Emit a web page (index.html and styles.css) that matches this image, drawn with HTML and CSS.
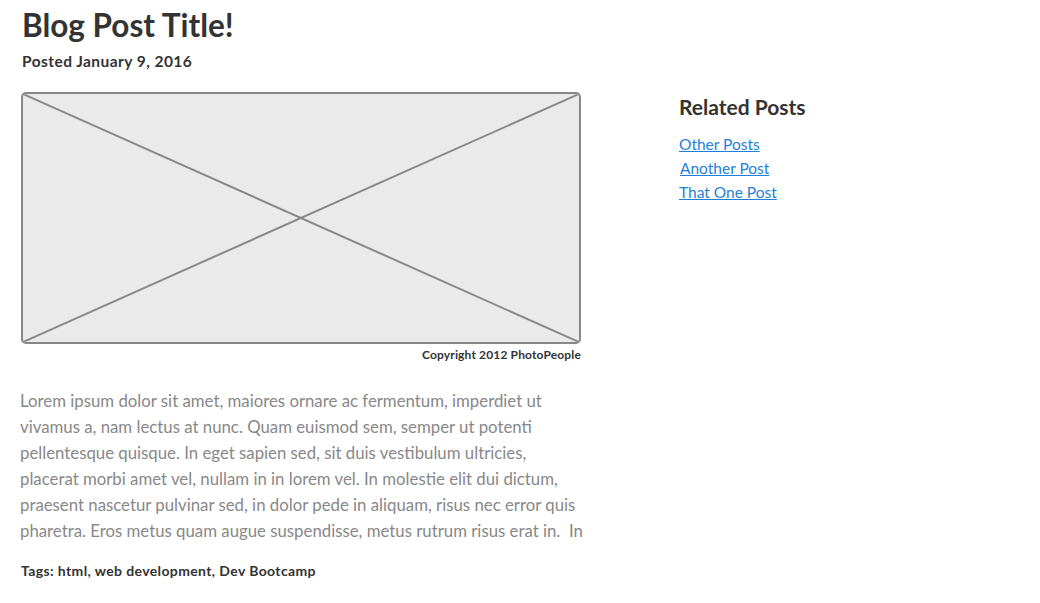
FILE: index.html
```html
<!DOCTYPE html>
<html>
<head>
<meta charset="utf-8">
<link rel="stylesheet" href="styles.css">
</head>
<body>
<div class="page">
  <main class="post">
    <h1 class="title">Blog Post Title!</h1>
    <p class="date">Posted January 9, 2016</p>
    <figure class="figure">
      <div class="placeholder">
        <svg class="cross" viewBox="0 0 100 100" preserveAspectRatio="none">
          <line x1="0" y1="0" x2="100" y2="100"/>
          <line x1="100" y1="0" x2="0" y2="100"/>
        </svg>
      </div>
      <figcaption class="caption">Copyright 2012 PhotoPeople</figcaption>
    </figure>
    <p class="body-text">Lorem ipsum dolor sit amet, maiores ornare ac fermentum, imperdiet ut vivamus a, nam lectus at nunc. Quam euismod sem, semper ut potenti pellentesque quisque. In eget sapien sed, sit duis vestibulum ultricies, placerat morbi amet vel, nullam in in lorem vel. In molestie elit dui dictum, praesent nascetur pulvinar sed, in dolor pede in aliquam, risus nec error quis pharetra. Eros metus quam augue suspendisse, metus rutrum risus erat in.&nbsp; In</p>
    <p class="tags">Tags: html, web development, Dev Bootcamp</p>
  </main>
  <aside class="sidebar">
    <h2 class="side-title">Related Posts</h2>
    <ul class="links">
      <li><a href="#">Other Posts</a></li>
      <li><a href="#" class="nudge">Another Post</a></li>
      <li><a href="#">That One Post</a></li>
    </ul>
  </aside>
</div>
</body>
</html>
```
FILE: styles.css
```css
html, body {
  margin: 0;
  padding: 0;
  background: #fff;
}
body {
  font-family: Lato, "Open Sans", sans-serif;
  color: #333;
}
.page {
  display: flex;
  padding: 0 20px;
}
.post {
  width: 580px;
  flex: none;
}
.title {
  margin: 5px 0 0 2px;
  font-size: 31.5px;
  line-height: 40px;
  font-weight: 700;
  color: #333;
}
.date {
  margin: 7px 0 0 2px;
  font-size: 15.5px;
  letter-spacing: 0.45px;
  line-height: 18px;
  font-weight: 700;
  color: #333;
}
.figure {
  margin: 22px 0 0 1px;
  width: 560px;
}
.placeholder {
  height: 248px;
  border: 2px solid #888;
  border-radius: 5px;
  background: #eaeaea;
  overflow: hidden;
}
.cross {
  display: block;
  width: 100%;
  height: 100%;
}
.cross line {
  stroke: #888;
  stroke-width: 2;
  vector-effect: non-scaling-stroke;
}
.caption {
  margin-top: 3px;
  text-align: right;
  font-size: 12px;
  letter-spacing: 0.15px;
  line-height: 16px;
  font-weight: 700;
  color: #333;
}
.body-text {
  margin: 25px 0 0 0;
  width: 567.5px;
  font-size: 16.8px;
  line-height: 26px;
  color: #888;
}
.tags {
  margin: 19px 0 0 1px;
  font-size: 14px;
  letter-spacing: 0.38px;
  line-height: 16px;
  font-weight: 700;
  color: #333;
}
.sidebar {
  padding-top: 95px;
  margin-left: 79px;
}
.side-title {
  margin: 0;
  font-size: 21px;
  line-height: 24px;
  font-weight: 700;
  color: #333;
}
.links {
  list-style: none;
  margin: 13px 0 0 0;
  padding: 0;
}
.links li {
  font-size: 15.5px;
  line-height: 24px;
}
.links a {
  color: #1f7fd8;
  text-decoration: underline;
}
.links .nudge {
  margin-left: 1px;
}
```
